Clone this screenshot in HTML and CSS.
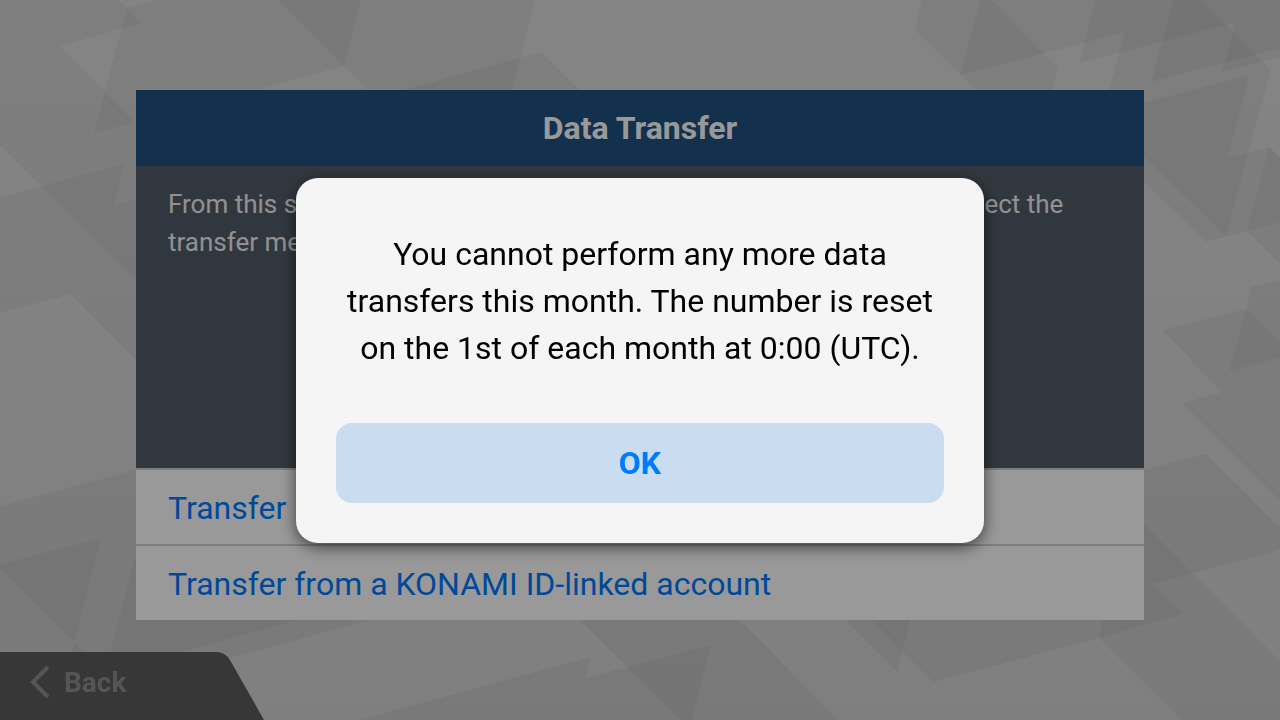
FILE: index.html
```html
<!DOCTYPE html>
<html lang="en">
<head>
    <meta charset="UTF-8">
    <meta name="viewport" content="width=device-width, initial-scale=1.0">
    <title>Data Transfer</title>
    <link rel="stylesheet" href="styles.css">
</head>
<body>

    <!-- Background shards -->
    <svg class="backdrop" viewBox="0 0 1280 720" preserveAspectRatio="xMidYMid slice" aria-hidden="true">
        <g fill="#000" fill-opacity="0.045">
            <!-- top left -->
            <path d="M0 0H119L142 23L60 46L136 123V281L0 145Z"/>
            <path fill-rule="evenodd" d="M156 0H535L511 95H136V122L94 133L127 8ZM258 89H367L344 66Z"/>
            <path d="M278 0L344 66L361 0Z"/>
            <path d="M400 91L541 52L580 91Z"/>
            <!-- left -->
            <path d="M0 197L124 164L114 205L136 199V361L71 294L0 313Z"/>
            <path d="M0 506L136 470V500L370 620L230 658L0 720Z"/>
            <path d="M0 564L101 538L72 652H84L0 568Z"/>
            <path d="M136 554L110 652H182L300 619H136Z"/>
            <!-- bottom -->
            <path d="M359 720L591 657L586 678L711 645L692 720Z"/>
            <path d="M579 619H739L838 720H680Z"/>
            <path d="M844 619L897 672L911 619Z"/>
            <path d="M870 619L933 682L1099 638L1103 619Z"/>
            <!-- right -->
            <path d="M1140 471L1206 454L1280 527V550L1153 584L1183 614L1099 638L1103 619H1140Z"/>
            <path d="M1140 520L1280 661V720H1182L1099 638L1103 619H1140Z"/>
            <path d="M1162 330L1246 309L1251 287L1280 280V501L1182 403L1222 392Z"/>
            <path d="M1246 309L1280 342V358L1229 371Z"/>
            <!-- top right -->
            <path d="M922 0L915 30L977 91H1052L1058 68L992 0Z"/>
            <path d="M980 0L960 75L1126 32L1133 0Z"/>
            <path d="M1095 0L1079 63L1235 23L1222 72L1280 57V0Z"/>
            <path d="M1133 0L1109 91H1144V182L1206 242L1247 231L1280 263V158L1269 147L1248 153L1271 70L1201 0Z"/>
            <path d="M1173 0L1151 82L1280 48V0Z"/>
            <path d="M1140 104L1249 75L1228 158L1248 153L1226 236L1140 153Z"/>
            <path d="M1269 147L1247 231L1280 222V158Z"/>
        </g>
    </svg>

    <main class="page">
        <section class="panel">
            <h1 class="panel-title">Data Transfer</h1>
            <p class="panel-text">From this screen, you can transfer all your saved game data. Please select the transfer method.</p>
            <a class="panel-link" href="#">Transfer</a>
            <a class="panel-link" href="#">Transfer from a KONAMI ID-linked account</a>
        </section>
    </main>

    <button class="back" type="button">
        <svg class="back-shape" viewBox="0 0 264 68" aria-hidden="true">
            <path d="M0 0H216Q225 0 230 8L264 68H0Z" fill="#5d5d5d"/>
        </svg>
        <svg class="back-arrow" viewBox="0 0 20 34" aria-hidden="true">
            <path d="M18 2L3 17L18 32" fill="none" stroke="currentColor" stroke-width="4"/>
        </svg>
        <span class="back-label">Back</span>
    </button>

    <div class="overlay">
        <div class="dialog" role="alertdialog" aria-modal="true" aria-describedby="message">
            <p class="dialog-text" id="message">You cannot perform any more data transfers this month. The number is reset on the 1st of each month at 0:00 (UTC).</p>
            <button class="dialog-button" type="button">OK</button>
        </div>
    </div>

</body>
</html>
```

FILE: styles.css
```css
* {
    box-sizing: border-box;
}

body {
    margin: 0;
    min-height: 100vh;
    display: flex;
    flex-direction: column;
    font-family: Roboto, "Liberation Sans", sans-serif;
    background: linear-gradient(#dddddd, #d4d4d4);
}

.backdrop {
    position: fixed;
    inset: 0;
    width: 100%;
    height: 100%;
}

.page {
    position: relative;
    flex: 1;
    padding: 90px 32px 32px;
}

.panel {
    display: flex;
    flex-direction: column;
    max-width: 1008px;
    margin: 0 auto;
}

.panel-title {
    margin: 0;
    font-size: 32px;
    line-height: 76px;
    font-weight: 700;
    text-align: center;
    color: #fff;
    background: #21507f;
}

.panel-text {
    margin: 0;
    min-height: 302px;
    padding: 19px 32px;
    font-size: 26px;
    line-height: 38px;
    color: #f2f2f2;
    background: #535d68;
}

.panel-link {
    padding: 2px 32px 0;
    font-size: 32px;
    line-height: 72px;
    color: #007aff;
    text-decoration: none;
    background: #fff;
    border-top: 2px solid #cfcfcf;
}

.back {
    position: relative;
    display: flex;
    align-items: center;
    align-self: flex-start;
    gap: 14px;
    width: 264px;
    height: 68px;
    padding: 0 0 8px 30px;
    font: inherit;
    font-size: 28px;
    font-weight: 700;
    color: #8e8e90;
    background: none;
    border: none;
    cursor: pointer;
}

.back-shape {
    position: absolute;
    inset: 0;
    width: 264px;
    height: 68px;
}

.back-arrow {
    position: relative;
    width: 20px;
    height: 34px;
}

.back-label {
    position: relative;
}

.overlay {
    position: fixed;
    inset: 0;
    display: flex;
    align-items: center;
    justify-content: center;
    background: rgba(0, 0, 0, 0.4);
}

.dialog {
    width: 688px;
    max-width: 90%;
    padding: 53px 40px 40px;
    background: #f5f5f5;
    border-radius: 22px;
    box-shadow: 0 4px 16px rgba(0, 0, 0, 0.6);
}

.dialog-text {
    margin: 0 0 51px;
    font-size: 32px;
    line-height: 47px;
    text-align: center;
    color: #000;
}

.dialog-button {
    display: block;
    width: 100%;
    height: 80px;
    font: inherit;
    font-size: 32px;
    font-weight: 700;
    color: #007aff;
    background: #cadcf0;
    border: none;
    border-radius: 16px;
    cursor: pointer;
}

.dialog-button:hover {
    background: #bcd3ec;
}
```
